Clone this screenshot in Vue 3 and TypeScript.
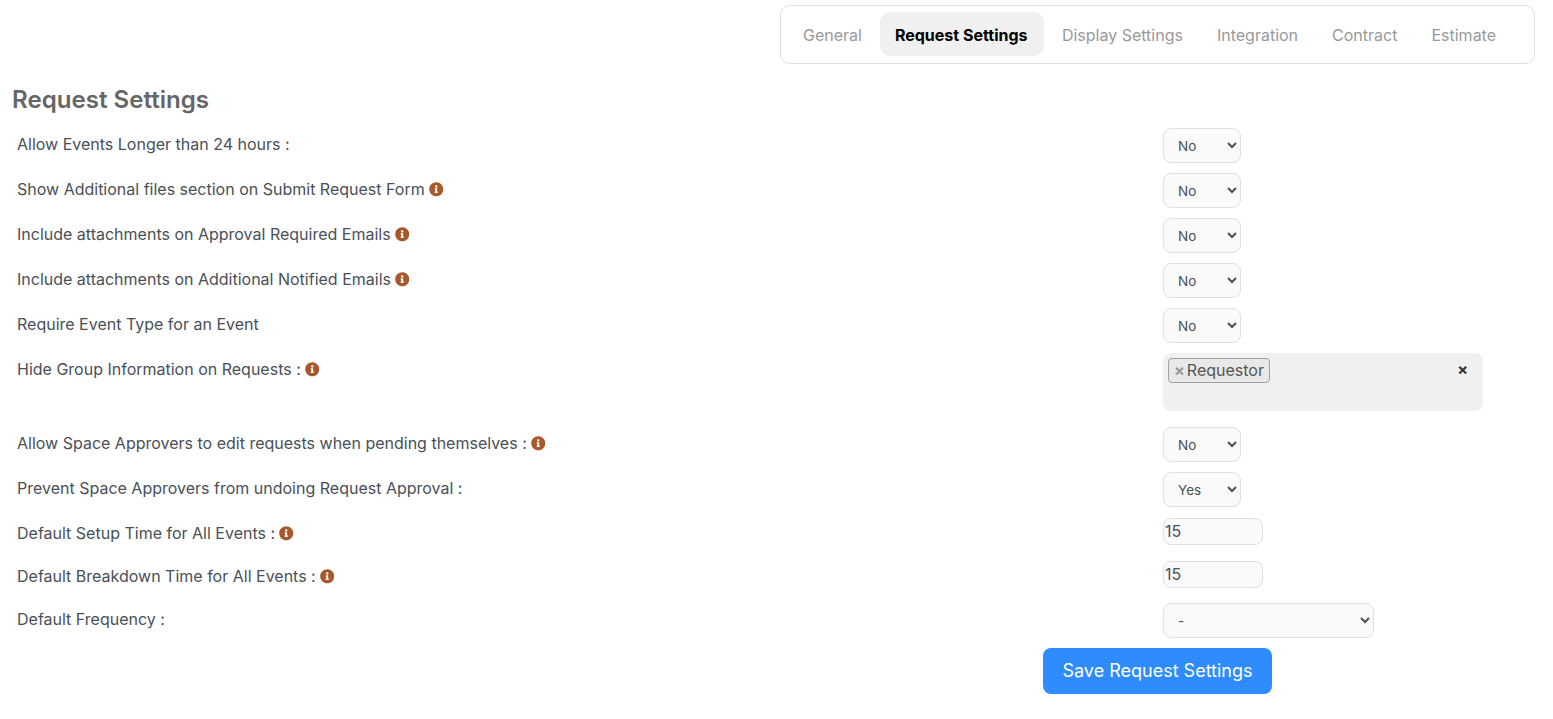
<script setup lang="ts">
interface Row {
  label: string
  info?: boolean
  kind: 'select' | 'multi' | 'number' | 'freq'
  value?: string
  gap: number
}
const tabs = ['General', 'Request Settings', 'Display Settings', 'Integration', 'Contract', 'Estimate']
const rows: Row[] = [
  { label: 'Allow Events Longer than 24 hours :', kind: 'select', value: 'No', gap: 10 },
  { label: 'Show Additional files section on Submit Request Form', info: true, kind: 'select', value: 'No', gap: 10 },
  { label: 'Include attachments on Approval Required Emails', info: true, kind: 'select', value: 'No', gap: 10 },
  { label: 'Include attachments on Additional Notified Emails', info: true, kind: 'select', value: 'No', gap: 10 },
  { label: 'Require Event Type for an Event', kind: 'select', value: 'No', gap: 10 },
  { label: 'Hide Group Information on Requests :', info: true, kind: 'multi', gap: 16 },
  { label: 'Allow Space Approvers to edit requests when pending themselves :', info: true, kind: 'select', value: 'No', gap: 10 },
  { label: 'Prevent Space Approvers from undoing Request Approval :', kind: 'select', value: 'Yes', gap: 11 },
  { label: 'Default Setup Time for All Events :', info: true, kind: 'number', value: '15', gap: 11 },
  { label: 'Default Breakdown Time for All Events :', info: true, kind: 'number', value: '15', gap: 10 },
  { label: 'Default Frequency :', kind: 'freq', gap: 10 },
]
const infoPath = 'M256 8C119.043 8 8 119.083 8 256c0 136.997 111.043 248 248 248s248-111.003 248-248C504 119.083 392.957 8 256 8zm0 110c23.196 0 42 18.804 42 42s-18.804 42-42 42-42-18.804-42-42 18.804-42 42-42zm56 254c0 6.627-5.373 12-12 12h-88c-6.627 0-12-5.373-12-12v-24c0-6.627 5.373-12 12-12h12v-64h-12c-6.627 0-12-5.373-12-12v-24c0-6.627 5.373-12 12-12h64c6.627 0 12 5.373 12 12v100h12c6.627 0 12 5.373 12 12v24z'
</script>

<template>
  <div class="page">
    <div class="tabs-wrap">
      <nav class="tabs">
        <a v-for="(t, i) in tabs" :key="t" class="tab" :class="{ active: i === 1 }">{{ t }}</a>
      </nav>
    </div>
    <h2 class="title">Request Settings</h2>
    <form class="form" @submit.prevent>
      <div v-for="r in rows" :key="r.label" class="row" :style="{ marginBottom: r.gap + 'px' }">
        <label class="label" :class="{ 'label-num': r.kind === 'number' }">
          <span>{{ r.label }}</span>
          <svg v-if="r.info" class="info" viewBox="0 0 512 512"><path :d="infoPath" /></svg>
        </label>
        <div class="control">
          <select v-if="r.kind === 'select'" class="sel">
            <option>{{ r.value }}</option>
          </select>
          <div v-else-if="r.kind === 'multi'" class="multi">
            <span class="chip"><span class="chip-x">×</span>Requestor</span>
            <span class="clear">×</span>
          </div>
          <input v-else-if="r.kind === 'number'" class="num" type="text" :value="r.value" />
          <select v-else class="sel freq"><option>-</option></select>
        </div>
      </div>
      <div class="actions">
        <button class="save" type="button">Save Request Settings</button>
      </div>
    </form>
  </div>
</template>

<style>
html, body { background: #fff; }
</style>

<style scoped>
.page {
  font-family: Inter, "Liberation Sans", sans-serif;
  color: #495057;
  height: 719px;
  overflow: hidden;
  box-sizing: border-box;
  padding-top: 5px;
}
.tabs-wrap { display: flex; justify-content: flex-end; padding-right: 18px; }
.tabs {
  width: 755px;
  height: 59px;
  box-sizing: border-box;
  border: 1px solid #dfdfdf;
  border-radius: 10px;
  display: flex;
  align-items: flex-start;
  padding: 6px 7px 0 7px;
}
.tab {
  font-size: 16px;
  font-weight: 400;
  color: #999;
  padding: 13px 15px 11px;
  line-height: 20px;
  border-radius: 10px;
  margin-right: 4px;
}
.tab.active {
  background: #f0f0f0;
  color: #000;
  font-weight: 700;
  margin-left: -1px;
  margin-right: 3.4px;
  padding-right: 16px;
}
.title {
  margin: 21px 0 0 12px;
  font-size: 24.1px;
  line-height: 30px;
  font-weight: 600;
  color: #666;
}
.form { margin-top: 13px; }
.row { display: flex; }
.label {
  width: 1146px;
  margin-left: 17px;
  flex: none;
  font-size: 16px;
  line-height: 32px;
  color: #495057;
  display: flex;
  align-items: flex-start;
  height: 32px;
}
.info { width: 14.5px; height: 14.5px; fill: #a9582c; margin: 9px 0 0 4px; flex: none; }
.label-num { line-height: 30px; }
.label-num .info { margin-top: 8px; }
.control { flex: none; display: flex; }
.sel {
  width: 78px;
  height: 35px;
  box-sizing: border-box;
  border: 1px solid #e0e0e0;
  border-radius: 8px;
  background: #fafafa;
  color: #495057;
  font-family: Inter, sans-serif;
  font-size: 13.5px;
  padding: 0 10px;
  display: block;
}
.freq { width: 211px; }
.multi {
  width: 320px;
  height: 58px;
  background: #f0f0f0;
  border-radius: 8px;
  box-sizing: border-box;
  padding: 5px 15px 0 5px;
  display: flex;
  align-items: flex-start;
  justify-content: space-between;
}
.chip {
  display: inline-flex;
  align-items: center;
  height: 25px;
  box-sizing: border-box;
  border: 1px solid #a0a0a0;
  border-radius: 4px;
  background: #e8e8e8;
  font-size: 16px;
  line-height: 22px;
  color: #555;
  padding: 0 5px 2px 5px;
}
.chip-x { color: #999; font-weight: 700; margin: 1px 2px 0 0; font-size: 16px; }
.clear { color: #333; font-weight: 700; font-size: 16px; line-height: 23px; }
.num {
  width: 100px;
  height: 27px;
  box-sizing: border-box;
  border: 1px solid #e0e0e0;
  border-radius: 8px;
  background: #fafafa;
  color: #495057;
  font-family: Inter, sans-serif;
  font-size: 16px;
  padding: 0 1px 2px;
  display: block;
}
.actions { display: flex; padding-left: 1043px; }
.save {
  width: 229px;
  height: 46px;
  border: none;
  border-radius: 8px;
  background: #2e8cff;
  color: #fff;
  font-family: Inter, sans-serif;
  font-size: 18px;
  font-weight: 400;
  padding: 0 0 2px;
}
</style>
